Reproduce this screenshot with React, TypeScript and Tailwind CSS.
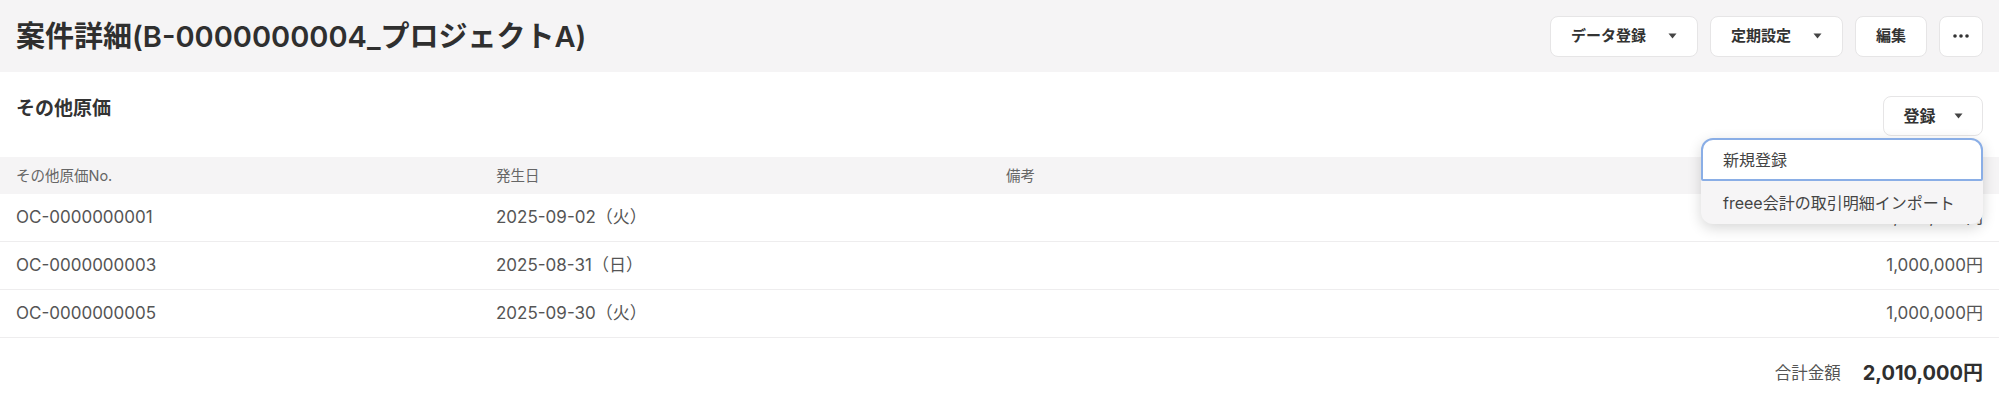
import React from "react";

const font = { fontFamily: 'Inter, "Noto Sans CJK JP", sans-serif' };

const Caret = () => (
  <svg width="9" height="6" viewBox="0 0 9 6" className="shrink-0">
    <polygon points="0.5,0.5 8.5,0.5 4.5,5.5" fill="#444" />
  </svg>
);

const HeadButton = ({ label, caret }: { label: string; caret?: boolean }) => (
  <button className="h-[41px] px-5 flex items-center gap-[22px] bg-white border border-[#e6e5e6] rounded-[8px] text-[15px] font-semibold text-[#333]">
    {label}
    {caret && <Caret />}
  </button>
);

const rows = [
  { no: "OC-0000000001", date: "2025-09-02（火）", note: "", amount: "1,000,000円" },
  { no: "OC-0000000003", date: "2025-08-31（日）", note: "", amount: "1,000,000円" },
  { no: "OC-0000000005", date: "2025-09-30（火）", note: "", amount: "1,000,000円" },
];

const cols = "grid grid-cols-[480px_510px_1fr_200px]";

const App = () => {
  return (
    <div className="w-full min-h-[413px] bg-white" style={font}>
      {/* Page header */}
      <div className="h-[72px] bg-[#f5f4f5] flex items-center justify-between px-4">
        <h1 className="text-[29px] font-semibold text-[#2f2f2f] leading-none">
          案件詳細(B-0000000004_プロジェクトA)
        </h1>
        <div className="flex items-center gap-3">
          <HeadButton label="データ登録" caret />
          <HeadButton label="定期設定" caret />
          <HeadButton label="編集" />
          <button className="h-[41px] w-[44px] flex items-center justify-center bg-white border border-[#e6e5e6] rounded-[8px]">
            <svg width="16" height="4" viewBox="0 0 16 4">
              <circle cx="2" cy="2" r="1.8" fill="#333" />
              <circle cx="8" cy="2" r="1.8" fill="#333" />
              <circle cx="14" cy="2" r="1.8" fill="#333" />
            </svg>
          </button>
        </div>
      </div>

      {/* Section title + register */}
      <div className="flex items-start justify-between px-4 pt-6">
        <h2 className="text-[19px] font-bold text-[#333] leading-[26px]">その他原価</h2>
        <div className="relative">
          <button className="h-10 w-[100px] flex items-center justify-center gap-[18px] bg-white border border-[#e6e5e6] rounded-[8px] text-[16px] font-semibold text-[#333]">
            登録
            <Caret />
          </button>
          <div className="absolute right-0 top-full mt-[2px] w-[282px] z-10 bg-[#f6f5f6] rounded-[12px] shadow-[0_4px_14px_rgba(0,0,0,0.16)]">
            <div className="h-[43px] flex items-center px-[20px] bg-white border-2 border-[#8aaee6] rounded-t-[12px] rounded-b-[2px] text-[16px] text-[#444]">
              新規登録
            </div>
            <div className="h-[43px] flex items-center px-[22px] text-[16px] text-[#444]">
              freee会計の取引明細インポート
            </div>
          </div>
        </div>
      </div>

      {/* Table */}
      <div className="mt-[21px]">
        <div className={`${cols} h-[37px] items-center bg-[#f5f4f5] text-[14.5px] text-[#666]`}>
          <div className="pl-4">その他原価No.</div>
          <div className="pl-4">発生日</div>
          <div className="pl-4">備考</div>
          <div className="pr-4 text-right">金額</div>
        </div>
        {rows.map((r) => (
          <div
            key={r.no}
            className={`${cols} h-[48px] items-center border-b border-[#eeedee] text-[17px] text-[#555]`}
          >
            <div className="pl-4">{r.no}</div>
            <div className="pl-4">{r.date}</div>
            <div className="pl-4">{r.note}</div>
            <div className="pr-4 text-right">{r.amount}</div>
          </div>
        ))}
      </div>

      {/* Total */}
      <div className="h-[70px] flex items-center justify-end gap-[22px] px-4">
        <span className="text-[16.5px] text-[#555]">合計金額</span>
        <span className="text-[20px] font-bold text-[#2f2f2f]">2,010,000円</span>
      </div>
    </div>
  );
};

export default App;
